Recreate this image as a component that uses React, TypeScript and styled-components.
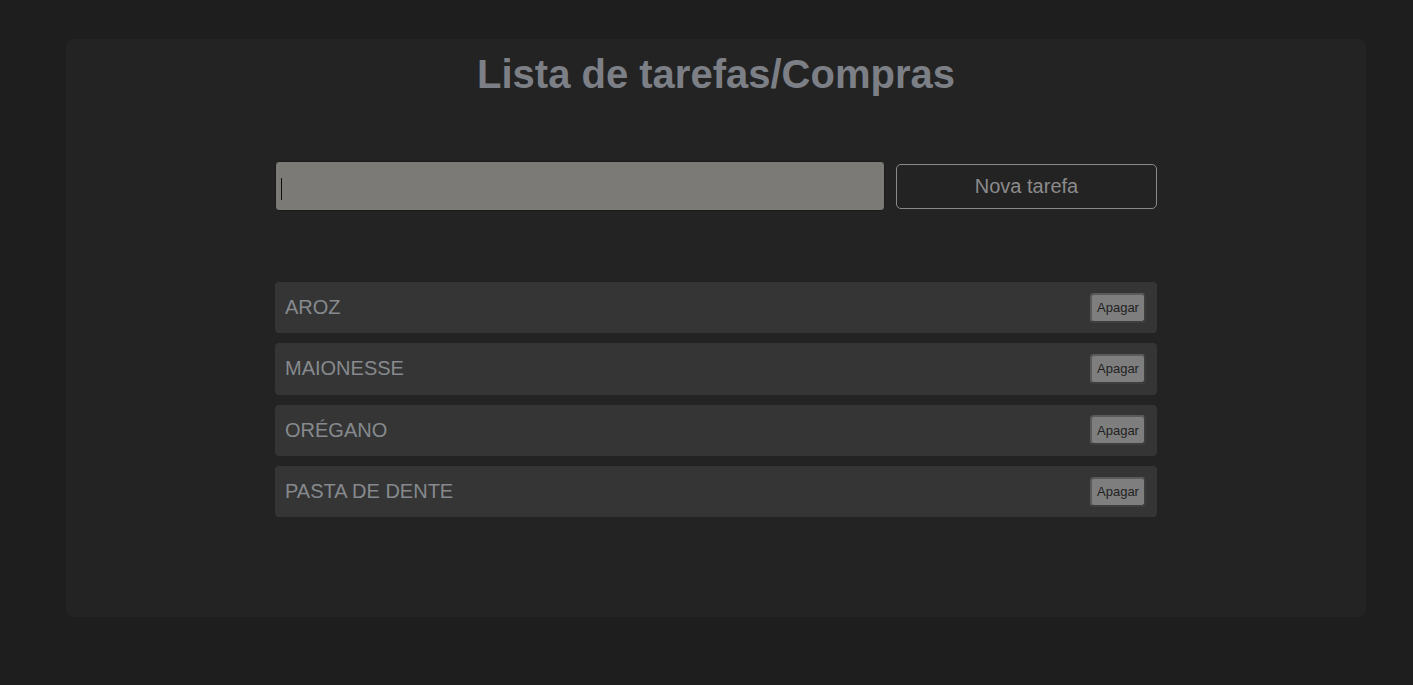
import React, { useState } from "react";
import styled, { createGlobalStyle } from "styled-components";

const Global = createGlobalStyle`
  html, body { margin: 0; padding: 0; background: #1e1e1e; }
  body { font-family: "Liberation Sans", Arial, sans-serif; }
  * { box-sizing: border-box; }
`;

const Page = styled.div`
  padding: 39px 47px 68px 66px;
`;

const Card = styled.main`
  background: #232323;
  border-radius: 8px;
  height: 578px;
  padding: 12px 0 0;
  display: flex;
  flex-direction: column;
  align-items: center;
`;

const Title = styled.h1`
  margin: 0;
  font-size: 40px;
  line-height: 46px;
  font-weight: 700;
  color: #7c8086;
  text-align: center;
`;

const Form = styled.form`
  margin-top: 64px;
  width: 882px;
  display: flex;
  align-items: center;
  gap: 11px;
`;

const InputWrap = styled.div`
  position: relative;
  width: 610px;
  height: 50px;

  &::after {
    content: "";
    position: absolute;
    left: 6px;
    top: 17px;
    width: 1px;
    height: 22px;
    background: #111;
    pointer-events: none;
  }
  &:focus-within::after {
    display: none;
  }
`;

const Input = styled.input`
  width: 100%;
  height: 100%;
  background: #7b7a76;
  border: 1px solid #1c1c1c;
  border-radius: 4px;
  padding: 0 5px;
  font-size: 20px;
  font-family: "Liberation Sans", Arial, sans-serif;
  color: #111;
  caret-color: #000;
  outline: none;
`;

const AddButton = styled.button`
  width: 261px;
  height: 45px;
  background: transparent;
  border: 1px solid #8a8a8a;
  border-radius: 5px;
  color: #8b8b8b;
  font-size: 20px;
  font-family: "Liberation Sans", Arial, sans-serif;
  cursor: pointer;
`;

const List = styled.ul`
  list-style: none;
  margin: 71px 0 0;
  padding: 0;
  width: 882px;
  display: flex;
  flex-direction: column;
  gap: 10px;
`;

const Item = styled.li`
  height: 51.3px;
  background: #353535;
  border-radius: 4px;
  display: flex;
  align-items: center;
  justify-content: space-between;
  padding: 0 11px 0 10px;
`;

const ItemText = styled.span`
  font-size: 20px;
  color: #868a8e;
`;

const DeleteButton = styled.button`
  width: 56px;
  height: 30px;
  background: #7e7e7e;
  border: 2px solid #3e3e3e;
  border-top-color: #5a5a5a;
  border-left-color: #5a5a5a;
  border-radius: 4px;
  color: #222;
  font-size: 13px;
  font-family: "Liberation Sans", Arial, sans-serif;
  padding: 0;
  cursor: pointer;
`;

export default function App() {
  const [items, setItems] = useState(["AROZ", "MAIONESSE", "ORÉGANO", "PASTA DE DENTE"]);
  const [value, setValue] = useState("");
  return (
    <Page>
      <Global />
      <Card>
        <Title>Lista de tarefas/Compras</Title>
        <Form
          onSubmit={(e) => {
            e.preventDefault();
            if (value.trim()) setItems([...items, value.toUpperCase()]);
            setValue("");
          }}
        >
          <InputWrap>
            <Input value={value} onChange={(e) => setValue(e.target.value)} />
          </InputWrap>
          <AddButton type="submit">Nova tarefa</AddButton>
        </Form>
        <List>
          {items.map((it, i) => (
            <Item key={it + i}>
              <ItemText>{it}</ItemText>
              <DeleteButton onClick={() => setItems(items.filter((_, j) => j !== i))}>Apagar</DeleteButton>
            </Item>
          ))}
        </List>
      </Card>
    </Page>
  );
}
